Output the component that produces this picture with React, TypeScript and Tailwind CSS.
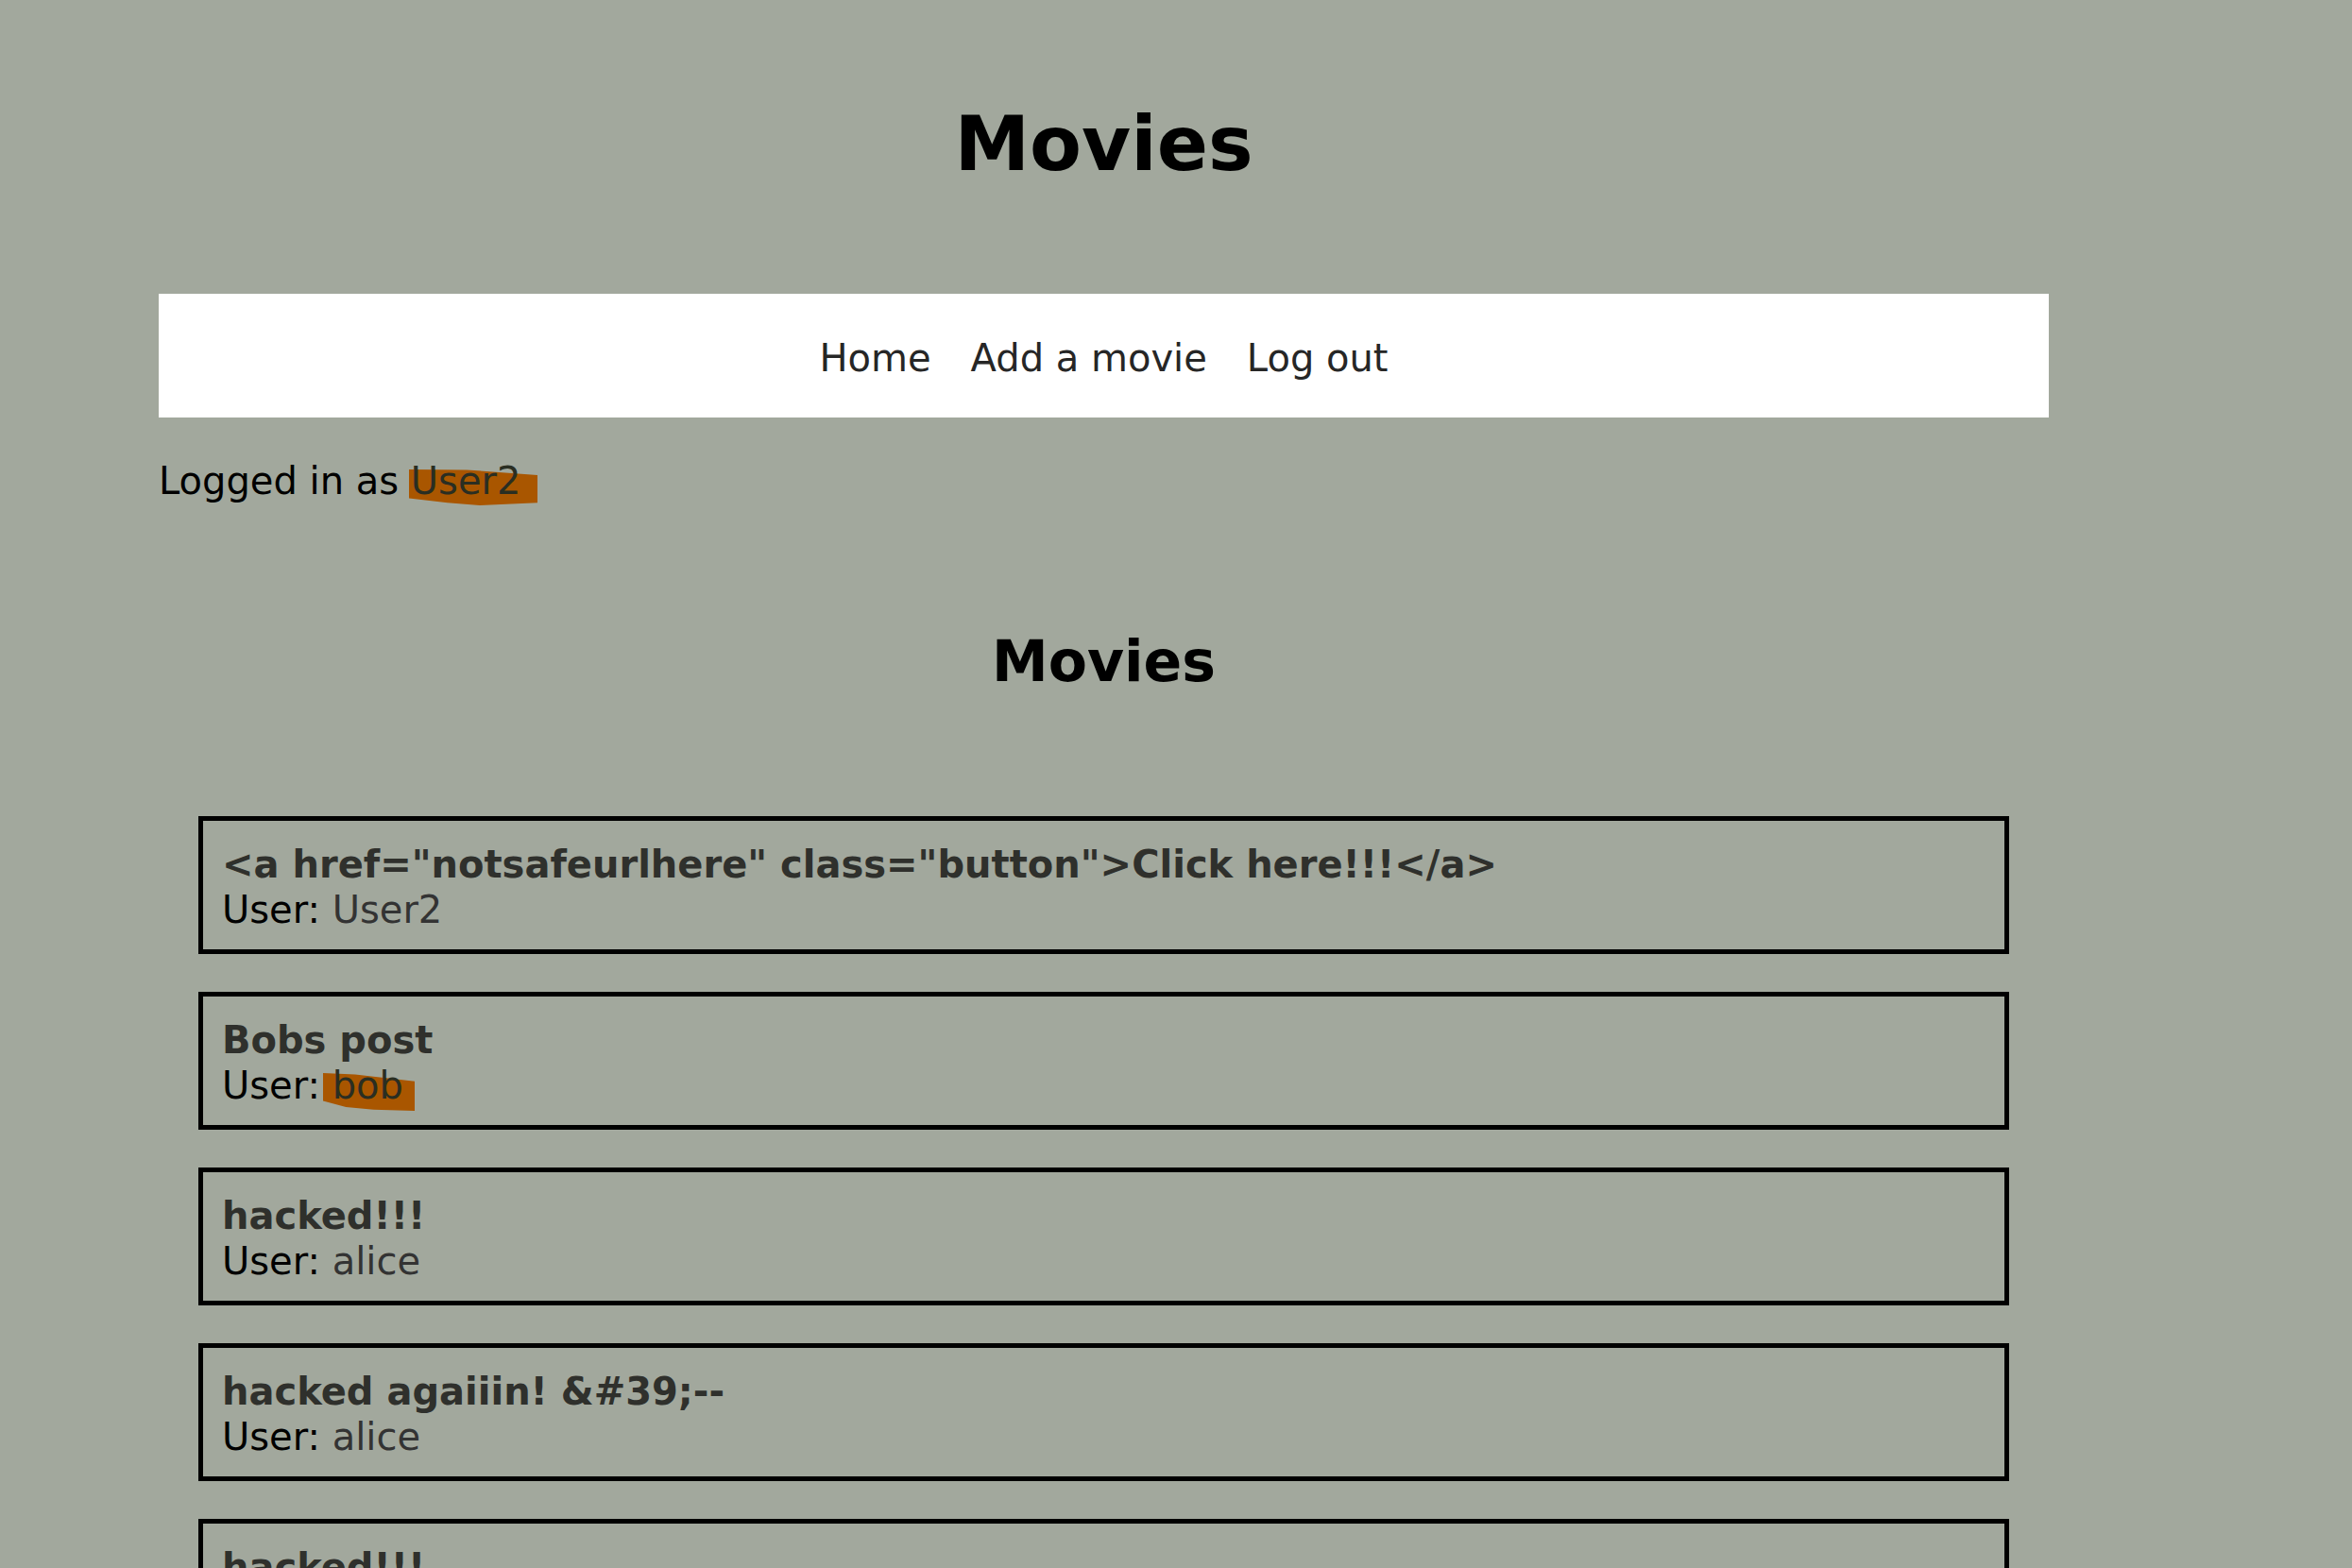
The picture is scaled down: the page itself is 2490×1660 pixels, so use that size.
import React from "react";

function Scribble({ className, d }: { className: string; d: string }) {
  return (
    <svg
      className={"pointer-events-none absolute -z-10 " + className}
      viewBox="0 0 100 100"
      preserveAspectRatio="none"
    >
      <path d={d} fill="#a95600" />
    </svg>
  );
}

const movies = [
  { title: '<a href="notsafeurlhere" class="button">Click here!!!</a>', user: "User2", mark: false },
  { title: "Bobs post", user: "bob", mark: true },
  { title: "hacked!!!", user: "alice", mark: false },
  { title: "hacked agaiiin! &#39;--", user: "alice", mark: false },
  { title: "hacked!!!", user: "alice", mark: false },
];

export default function App() {
  return (
    <div className="relative isolate h-[1660px] overflow-hidden bg-[#a2a89d] font-['DejaVu_Sans',sans-serif] text-[40px] leading-[normal] text-black pt-[106px]">
      <div className="ml-[168px] w-[2001px]">
        <h1 className="text-center text-[80px] font-bold">Movies</h1>
        <nav className="mt-[112px] flex h-[131px] items-center justify-center gap-[42px] bg-white pt-[4px] text-[#262626]">
          <a>Home</a>
          <a>Add a movie</a>
          <a>Log out</a>
        </nav>
        <p className="mt-[44px]">
          Logged in as{" "}
          <span className="relative text-[#2a2e22]">
            User2
            <Scribble
              className="left-[-2px] top-[11px] h-[38px] w-[136px]"
              d="M0 0 L45 1 L100 16 L100 93 L55 100 L30 93 L0 80 Z"
            />
          </span>
        </p>
        <h2 className="mt-[133px] text-center text-[60px] font-bold">Movies</h2>
        <div className="mx-[42px] mt-[129px] flex flex-col gap-[40px]">
          {movies.map((m, i) => (
            <div key={i} className="h-[146px] border-[5px] border-black px-[20px] pt-[22px] leading-[48px]">
              <div className="font-bold text-[#2f302c]">{m.title}</div>
              <div>
                User:{" "}
                <span className={"relative " + (m.mark ? "text-[#2a2e22]" : "text-[#333]")}>
                  {m.user}
                  {m.mark && (
                    <Scribble
                      className="left-[-10px] top-[10px] h-[40px] w-[97px]"
                      d="M0 0 L35 4 L100 22 L100 100 L55 97 L25 90 L0 74 Z"
                    />
                  )}
                </span>
              </div>
            </div>
          ))}
        </div>
      </div>
    </div>
  );
}
